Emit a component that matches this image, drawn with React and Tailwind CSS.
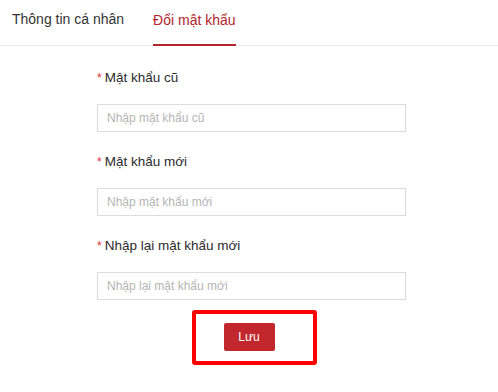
import React from 'react';

const fields = [
    { label: 'Mật khẩu cũ', placeholder: 'Nhập mật khẩu cũ' },
    { label: 'Mật khẩu mới', placeholder: 'Nhập mật khẩu mới' },
    { label: 'Nhập lại mật khẩu mới', placeholder: 'Nhập lại mật khẩu mới' },
];

const App = () => {
    return (
        <div className="w-[498px] h-[392px] bg-white font-['Liberation_Sans',Arial,sans-serif] overflow-hidden">
            {/* tabs */}
            <div className="flex items-end gap-[29px] pl-3 h-[46px] border-b border-[#e8e8e8]">
                <div className="h-full flex items-center text-[14px] text-[#333] pb-[6px]">Thông tin cá nhân</div>
                <div className="h-full flex items-center text-[14px] text-[#b3242c] border-b-2 border-[#b3242c] -mb-px pb-[4px]">
                    Đổi mật khẩu
                </div>
            </div>

            <div className="ml-[97px] w-[309px] pt-[22px]">
                {fields.map((f) => (
                    <div key={f.label} className="mb-[20px]">
                        <label className="flex items-center h-5 text-[13.5px] text-[#2b2b2b]">
                            <span className="text-[#e0303a] mr-[3px] text-[12px]">*</span>
                            {f.label}
                        </label>
                        <input
                            type="password"
                            placeholder={f.placeholder}
                            className="mt-[16px] w-full h-[28px] border border-[#dcdcdc] px-[9px] text-[12px] placeholder:text-[#b5b5b5] outline-none"
                        />
                    </div>
                ))}
            </div>

            <div className="flex ml-[192px] -mt-[10px]">
                <div className="w-[125px] h-[55px] border-4 border-[#ff0000] rounded-[3px] flex items-center justify-center">
                    <button className="-ml-[11px] -mt-[2px] w-[51px] h-[28px] bg-[#c1272d] text-white text-[12px] rounded-[2px]">
                        Lưu
                    </button>
                </div>
            </div>
        </div>
    );
};

export default App;
